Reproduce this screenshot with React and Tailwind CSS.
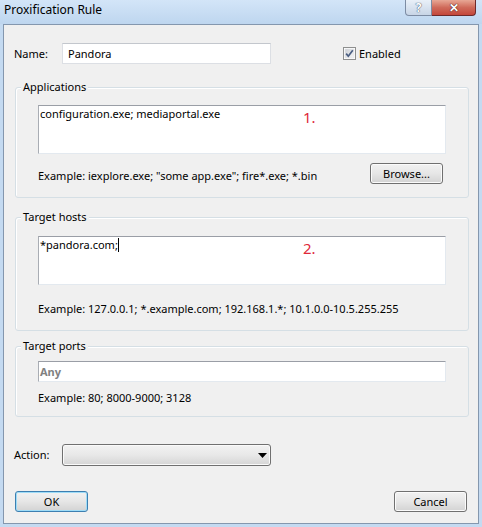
import React from "react";

function CheckBox() {
  return (
    <svg width="13" height="13" viewBox="0 0 13 13" className="block">
      <defs>
        <linearGradient id="cbg" x1="0" y1="0" x2="1" y2="1">
          <stop offset="0" stopColor="#cbcfd5" />
          <stop offset="1" stopColor="#f7f7f7" />
        </linearGradient>
      </defs>
      <rect x="0.5" y="0.5" width="12" height="12" fill="#ffffff" stroke="#8e8f8f" />
      <rect x="2" y="2" width="9" height="9" fill="url(#cbg)" stroke="#dfe1e4" strokeWidth="0.6" />
      <path d="M3.2 6.6 L5.3 9.2 L9.8 3.2" fill="none" stroke="#4a5e82" strokeWidth="1.7" />
    </svg>
  );
}

function WinButton({ children, focused, className = "" }) {
  return (
    <div
      className={
        "h-[21px] w-[73px] rounded-[3px] border flex items-center justify-center text-black bg-gradient-to-b from-[#f2f2f2] via-[#e6e6e6] to-[#d3d3d3] " +
        (focused
          ? "border-[#3c7fb1] shadow-[inset_0_0_0_1px_#9fdcf7] "
          : "border-[#707070] shadow-[inset_0_0_0_1px_#fbfbfb] ") +
        className
      }
    >
      <span className="leading-[16px]">{children}</span>
    </div>
  );
}

function GroupBox({ title, className = "", children }) {
  return (
    <div
      className={
        "relative ml-[11px] w-[454px] rounded-[3px] border border-[#d5dfe5] shadow-[inset_1px_1px_0_#ffffff] " +
        className
      }
    >
      <span className="absolute left-[5px] top-[-9px] px-[2px] bg-[#f0f0f0] leading-[16px] text-black">
        {title}
      </span>
      {children}
    </div>
  );
}

export default function App() {
  return (
    <div className="w-[482px] h-[527px] flex flex-col bg-[#c4daf1] font-['Noto_Sans',sans-serif] text-[11px] text-black overflow-hidden">
      {/* Title bar */}
      <div className="h-[24px] flex items-start justify-between bg-gradient-to-b from-[#d3e5f8] to-[#bed6ef]">
        <span className="ml-[4px] mt-[2px] text-[12px] leading-[16px] text-black">Proxification Rule</span>
        <div className="mr-[6px] flex">
          <div className="w-[27px] h-[16px] rounded-bl-[4px] border border-t-0 border-[#7d8ca3] bg-gradient-to-b from-[#e9f0f8] to-[#c8d5e6] flex items-center justify-center">
            <span className="text-[12px] leading-[12px] font-bold text-white [text-shadow:0_0_1px_#3a4a60,0_0_1px_#3a4a60]">?</span>
          </div>
          <div className="w-[44px] h-[16px] rounded-br-[4px] border border-t-0 border-l-0 border-[#6d2a2a] bg-gradient-to-b from-[#e7a795] via-[#cf6a5a] to-[#c4463a] flex items-center justify-center">
            <span className="text-[12px] leading-[12px] font-bold text-white [text-shadow:0_0_1px_#3c1010,0_0_1px_#3c1010]">✕</span>
          </div>
        </div>
      </div>

      {/* Client area */}
      <div className="mx-[3px] mb-[3px] flex-1 border border-[#8497ae] bg-[#f0f0f0] flex flex-col">
        {/* Name row */}
        <div className="mt-[18px] h-[21px] flex items-center pl-[10px]">
          <span className="w-[48px] leading-[16px]">Name:</span>
          <div className="w-[209px] h-[21px] border border-[#dcdfe4] border-t-[#c3c7cd] bg-white flex items-center px-[5px]">
            <span className="leading-[16px]">Pandora</span>
          </div>
          <div className="ml-[72px] flex items-center">
            <CheckBox />
            <span className="ml-[3px] leading-[16px]">Enabled</span>
          </div>
        </div>

        {/* Applications */}
        <GroupBox title="Applications" className="mt-[23px] pt-[17px] pb-[13px]">
          <div className="ml-[22px] w-[408px] h-[49px] relative bg-white border border-[#e3e9ef] border-t-[#9a9ea6] border-l-[#a9adb4]">
            <div className="px-[1px] leading-[16px]">configuration.exe; mediaportal.exe</div>
            <span className="absolute left-[264px] top-[2px] text-[15px] leading-[18px] text-[#e0283a]">1.</span>
          </div>
          <div className="ml-[22px] w-[408px] mt-[9px] flex items-end justify-between">
            <span className="leading-[16px]">Example: iexplore.exe; "some app.exe"; fire*.exe; *.bin</span>
            <WinButton className="mr-[3px]">Browse...</WinButton>
          </div>
        </GroupBox>

        {/* Target hosts */}
        <GroupBox title="Target hosts" className="mt-[19px] pt-[18px] pb-[13px]">
          <div className="ml-[22px] w-[408px] h-[49px] relative bg-white border border-[#e3e9ef] border-t-[#9a9ea6] border-l-[#a9adb4]">
            <div className="px-[1px] leading-[16px] flex items-center">
              <span>*pandora.com;</span>
              <span className="inline-block w-px h-[14px] bg-black"></span>
            </div>
            <span className="absolute left-[264px] top-[2px] text-[15px] leading-[18px] text-[#e0283a]">2.</span>
          </div>
          <div className="ml-[22px] mt-[16px] leading-[16px]">
            Example: 127.0.0.1; *.example.com; 192.168.1.*; 10.1.0.0-10.5.255.255
          </div>
        </GroupBox>

        {/* Target ports */}
        <GroupBox title="Target ports" className="mt-[15px] pt-[14px] pb-[10px]">
          <div className="ml-[22px] w-[408px] h-[21px] bg-white border border-[#e3e9ef] border-t-[#9a9ea6] border-l-[#a9adb4] flex items-center px-[1px]">
            <span className="font-bold text-[#808080] leading-[16px]">Any</span>
          </div>
          <div className="ml-[22px] mt-[8px] leading-[16px]">Example: 80; 8000-9000; 3128</div>
        </GroupBox>

        {/* Action */}
        <div className="mt-[27px] h-[22px] flex items-center pl-[10px]">
          <span className="w-[48px] leading-[16px]">Action:</span>
          <div className="w-[209px] h-[22px] rounded-[3px] border border-[#707070] bg-gradient-to-b from-[#f2f2f2] via-[#e8e8e8] to-[#d5d5d5] shadow-[inset_0_0_0_1px_#fafafa] flex items-center justify-end pr-[3px]">
            <svg width="9" height="5" viewBox="0 0 9 5">
              <path d="M0 0 H9 L4.5 5 Z" fill="#000" />
            </svg>
          </div>
        </div>

        {/* Buttons */}
        <div className="mt-[25px] px-[11px] flex justify-between">
          <WinButton focused>OK</WinButton>
          <WinButton>Cancel</WinButton>
        </div>
      </div>
    </div>
  );
}
